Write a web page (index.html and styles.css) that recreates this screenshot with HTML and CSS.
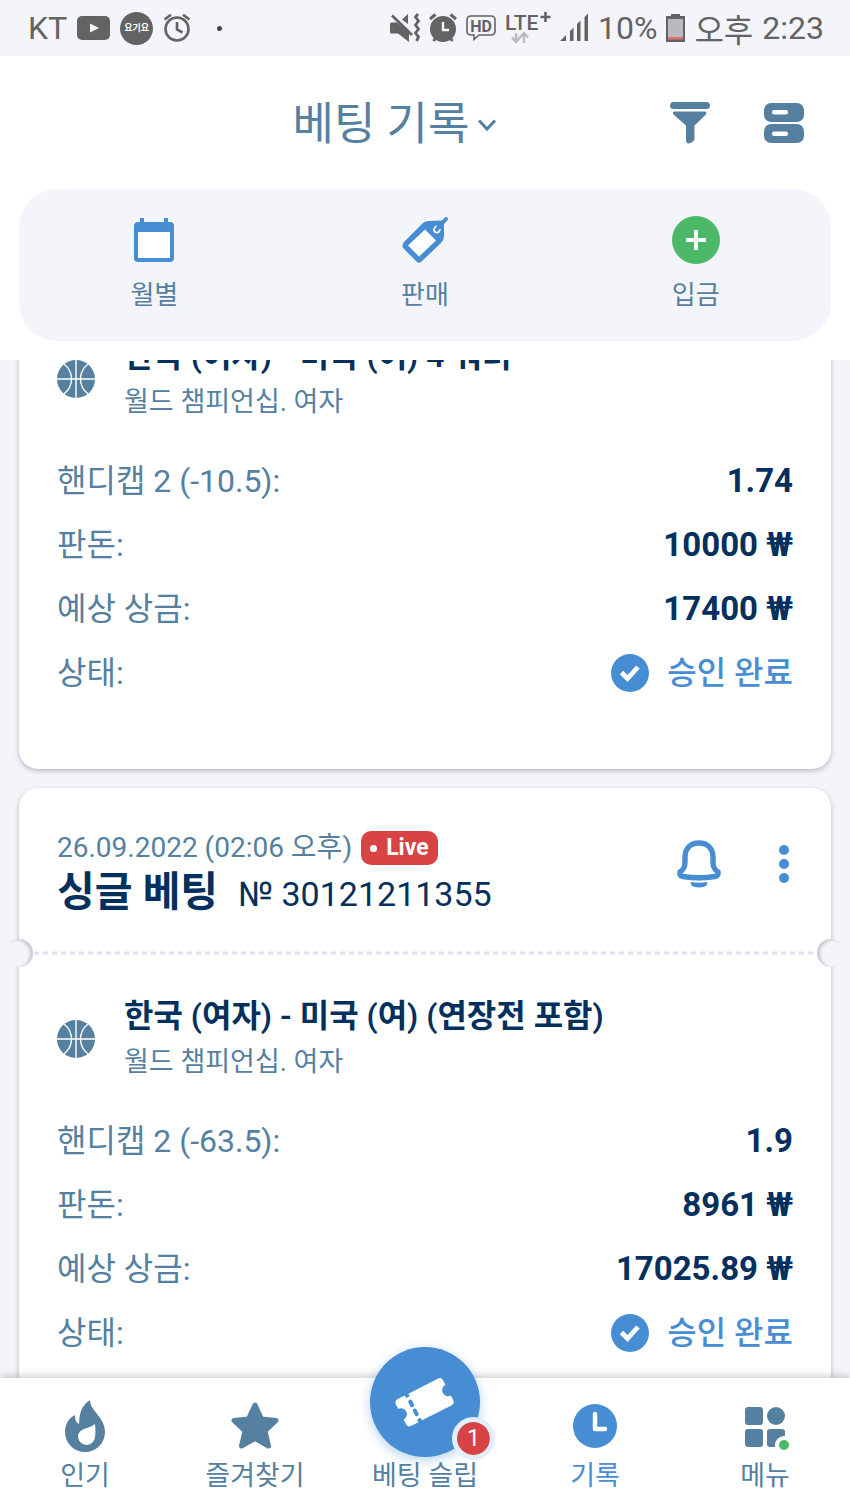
FILE: index.html
```html
<!DOCTYPE html>
<html lang="ko">
<head>
  <meta charset="UTF-8" />
  <meta name="viewport" content="width=device-width, initial-scale=1.0"/>
  <title>베팅 기록</title>
  <link rel="stylesheet" href="styles.css">
</head>
<body>
  <!-- Shared icons -->
  <svg class="sprite" aria-hidden="true">
    <symbol id="ball" viewBox="0 0 38 38">
      <circle cx="19" cy="19" r="19" fill="#5580a0"/>
      <path d="M19 0V38M0 19H38M7 4C17 12 17 26 7 34M31 4C21 12 21 26 31 34" fill="none" stroke="#fff" stroke-width="1.4"/>
    </symbol>
    <symbol id="check" viewBox="0 0 38 38">
      <circle cx="19" cy="19" r="19" fill="#478dd3"/>
      <path d="M10.5 18.500L16.500 24.500L27 13" fill="none" stroke="#fff" stroke-width="4.800"/>
    </symbol>
  </svg>

  <!-- Phone status bar -->
  <div class="status-bar">
    <div class="status-group">
      <span>KT</span>
      <svg width="33" height="24" viewBox="0 0 33 24"><rect width="33" height="24" rx="5" fill="#636363"/><path d="M13 7.500L22 12L13 16.500Z" fill="#f4f5fa"/></svg>
      <span class="app-dot">요기요</span>
      <svg width="28" height="30" viewBox="0 0 28 30" fill="none" stroke="#636363" stroke-width="2.600"><circle cx="14" cy="16" r="11.500"/><path d="M1.500 6.500L8 1.800M26.500 6.500L20 1.800M14 9V16.500L19.500 19.500"/></svg>
      <span class="status-more"></span>
    </div>
    <div class="status-group status-right">
      <svg width="30" height="30" viewBox="0 0 30 30"><path d="M0 11Q0 9.500 1.500 9.500H7L19 20V29L8 20.500H1.500Q0 20.500 0 19ZM18 1V11L12 6.500Z" fill="#636363"/><path d="M2 2.500L22 22" fill="none" stroke="#636363" stroke-width="2.800"/><path d="M28 1L25.500 4L28.500 8L25.500 12L28.500 16L25.500 20L28.500 24L26.500 28" fill="none" stroke="#636363" stroke-width="2.800"/></svg>
      <svg width="28" height="30" viewBox="0 0 28 30"><circle cx="14" cy="16" r="13" fill="#636363"/><path d="M1 6L6.500 1.500M27 6L21.500 1.500M4.500 28L7 24.500M23.500 28L21 24.500" stroke="#636363" stroke-width="3"/><path d="M14 9V17H20" fill="none" stroke="#f4f5fa" stroke-width="2.400"/></svg>
      <svg width="30" height="28" viewBox="0 0 30 28"><path d="M5 2H25Q29 2 29 6V17Q29 21 25 21H13L8 25.500V21H5Q1 21 1 17V6Q1 2 5 2Z" fill="none" stroke="#636363" stroke-width="1.600"/><text x="15" y="17.500" text-anchor="middle" class="hd">HD</text></svg>
      <svg width="46" height="34" viewBox="0 0 46 34"><text x="0" y="19" class="lte">LTE</text><path d="M40.500 1V11M35.500 6H45.500" stroke="#636363" stroke-width="2.600"/><path d="M11 22V30M7 26.500L11 31L15 26.500M19 32V23M15 26.500L19 22L23 26.500" fill="none" stroke="#b9babf" stroke-width="2.400"/></svg>
      <svg width="29" height="30" viewBox="0 0 29 30" fill="#636363"><path d="M0 28L6 22V28ZM10 28V18L13.500 14.500V28ZM17 28V11L20.500 7.500V28ZM24.500 28V4L28 .5V28Z"/></svg>
      <span>10%</span>
      <svg width="19" height="30" viewBox="0 0 19 30"><path d="M5 3V1H14V3H19V29H0V3Z" fill="#636363"/><rect x="2" y="6" width="15" height="18" fill="#b9babf"/><rect x="2" y="24" width="15" height="2.500" fill="#e07070"/></svg>
      <span>오후</span>
      <span>2:23</span>
    </div>
  </div>

  <!-- Header -->
  <header class="header">
    <button class="title-button">
      <h1>베팅 기록</h1>
      <svg width="20" height="14" viewBox="0 0 20 14"><path d="M2 2.500L10 11L18 2.500" fill="none" stroke="#5580a0" stroke-width="3"/></svg>
    </button>
    <div class="header-actions">
      <button aria-label="필터">
        <svg width="40" height="42" viewBox="0 0 40 42" fill="#5580a0"><rect width="40" height="7" rx="3.500"/><path d="M4 9.500H35Q37.500 10.500 35.500 13L24.500 23.500V37Q24 40 18.500 41.500Q16 41 16 38.500V23.500L4 13Q1.500 10.500 4 9.500Z"/></svg>
      </button>
      <button aria-label="보기 방식">
        <svg width="40" height="42" viewBox="0 0 40 42"><g fill="#5580a0"><rect y="1" width="40" height="19" rx="7"/><rect y="22" width="40" height="19" rx="7"/></g><rect x="8" y="8" width="16" height="4.500" rx="2" fill="#fff"/><rect x="8" y="29.500" width="16" height="4.500" rx="2" fill="#fff"/></svg>
      </button>
    </div>
  </header>

  <!-- Quick actions -->
  <div class="quick-wrap">
    <div class="quick-actions">
      <button class="quick-action">
        <svg width="48" height="48" viewBox="0 0 48 48"><path d="M12 2V8M36 2V8" stroke="#478dd3" stroke-width="4"/><rect x="4" y="6" width="40" height="40" rx="4" fill="#478dd3"/><rect x="8" y="16" width="32" height="26" fill="#fff"/></svg>
        <span>월별</span>
      </button>
      <button class="quick-action">
        <svg width="48" height="48" viewBox="0 0 48 48"><path d="M3 26L22 7Q24 5 28 5L40 4.500Q43 4.500 43 8V20Q43 24 40 27L20 46Q18 47.500 16 46L3 33Q0 30 3 26Z" fill="#478dd3"/><path d="M24 13.500L35 24.500L18 40.500L7 29.500Z" fill="#fff"/><path d="M36 10Q31 13 34 16Q38 18 39 13" fill="none" stroke="#fff" stroke-width="1.800"/><path d="M37 12L45 3" stroke="#478dd3" stroke-width="4" stroke-linecap="round"/></svg>
        <span>판매</span>
      </button>
      <button class="quick-action">
        <svg width="48" height="48" viewBox="0 0 48 48"><circle cx="24" cy="24" r="24" fill="#4cb868"/><path d="M24 14V34M14 24H34" stroke="#fff" stroke-width="4"/></svg>
        <span>입금</span>
      </button>
    </div>
  </div>

  <!-- Bet list, scrolled part way -->
  <main class="bets">
    <div class="bets-list">
      <article class="card card-cut">
        <div class="match">
          <svg class="round-icon"><use href="#ball"/></svg>
          <div>
            <h3>한국 (여자) - 미국 (여) 4 쿼터</h3>
            <p>월드 챔피언십. 여자</p>
          </div>
        </div>
        <dl class="details">
          <div class="row"><dt>핸디캡 2 (-10.5):</dt><dd>1.74</dd></div>
          <div class="row"><dt>판돈:</dt><dd>10000 ₩</dd></div>
          <div class="row"><dt>예상 상금:</dt><dd>17400 ₩</dd></div>
          <div class="row"><dt>상태:</dt><dd class="accepted"><svg class="round-icon"><use href="#check"/></svg>승인 완료</dd></div>
        </dl>
      </article>

      <article class="card">
        <div class="card-head">
          <div class="card-info">
            <div class="date-line"><time>26.09.2022 (02:06 오후)</time><span class="live">Live</span></div>
            <div class="bet-line"><h2>싱글 베팅</h2><span>№ 30121211355</span></div>
          </div>
          <button aria-label="알림">
            <svg width="44" height="48" viewBox="0 0 44 48"><path d="M8 17C8 8 14 3 22 3S36 8 36 17V22C36 28 38 30 41 32Q42 36 38 36.500Q22 39 6 36.500Q2 36 3 32C6 30 8 28 8 22Z" fill="none" stroke="#478dd3" stroke-width="5.400"/><path d="M14 42Q22 43.500 30 42Q32 47 22 47.500Q12 47 14 42Z" fill="#478dd3"/></svg>
          </button>
          <button aria-label="더 보기">
            <svg width="10" height="40" viewBox="0 0 10 40" fill="#478dd3"><circle cx="5" cy="6" r="5"/><circle cx="5" cy="20" r="5"/><circle cx="5" cy="34" r="5"/></svg>
          </button>
        </div>
        <div class="tear"><svg width="100%" height="2"><line x1="0" y1="1" x2="100%" y2="1" stroke="#dfe2ee" stroke-width="3" stroke-dasharray="5 4"/></svg></div>
        <div class="match">
          <svg class="round-icon"><use href="#ball"/></svg>
          <div>
            <h3>한국 (여자) - 미국 (여) (연장전 포함)</h3>
            <p>월드 챔피언십. 여자</p>
          </div>
        </div>
        <dl class="details">
          <div class="row"><dt>핸디캡 2 (-63.5):</dt><dd>1.9</dd></div>
          <div class="row"><dt>판돈:</dt><dd>8961 ₩</dd></div>
          <div class="row"><dt>예상 상금:</dt><dd>17025.89 ₩</dd></div>
          <div class="row"><dt>상태:</dt><dd class="accepted"><svg class="round-icon"><use href="#check"/></svg>승인 완료</dd></div>
        </dl>
      </article>
    </div>
  </main>

  <!-- Bottom navigation -->
  <nav class="nav">
    <a class="nav-item" href="#popular">
      <svg width="48" height="54" viewBox="0 0 48 54"><path d="M29 1C29 12 44 18 44 33A20 20 0 0 1 4 33C4 25 8 19 14 16C14 21 15 23 18 25C19 20 17 9 29 1Z" fill="#5580a0"/><path d="M34 25C28 30 17 29 17 38A8.500 8.500 0 0 0 26 46C35 45 35 36 34 25Z" fill="#fff"/></svg>
      <span>인기</span>
    </a>
    <a class="nav-item" href="#favorites">
      <svg width="48" height="54" viewBox="0 0 48 54"><path d="M24 6L30.500 20L45 21.500L34 32L37.500 47L24 39.500L10.500 47L14 32L3 21.500L17.500 20Z" fill="#5580a0" stroke="#5580a0" stroke-width="5" stroke-linejoin="round"/></svg>
      <span>즐겨찾기</span>
    </a>
    <a class="nav-item" href="#slip">
      <span class="slip-button">
        <svg width="60" height="50" viewBox="0 0 60 50"><g transform="rotate(-27 30 25)"><path d="M7 10H15V13H19V10H52Q56 10 56 14V19A6 6 0 0 0 56 31V36Q56 40 52 40H19V37H15V40H7Q3 40 3 36V31A6 6 0 0 0 3 19V14Q3 10 7 10Z" fill="#fff"/><path d="M17 18V22M17 28V32" stroke="#478dd3" stroke-width="4" stroke-linecap="round"/></g></svg>
        <span class="badge">1</span>
      </span>
      <span>베팅 슬립</span>
    </a>
    <a class="nav-item active" href="#history">
      <svg width="48" height="54" viewBox="0 0 48 54"><circle cx="24" cy="27" r="22" fill="#478dd3"/><path d="M24 15V30H34" fill="none" stroke="#fff" stroke-width="4.500" stroke-linecap="round" stroke-linejoin="round"/></svg>
      <span>기록</span>
    </a>
    <a class="nav-item" href="#menu">
      <svg width="48" height="54" viewBox="0 0 48 54"><g fill="#5580a0"><rect x="4" y="8" width="18" height="18" rx="3"/><circle cx="35" cy="17" r="9"/><rect x="4" y="30" width="18" height="18" rx="3"/><rect x="26" y="30" width="18" height="18" rx="3"/></g><circle cx="43" cy="46" r="9" fill="#fff"/><circle cx="43" cy="46" r="5" fill="#4cb868"/></svg>
      <span>메뉴</span>
    </a>
  </nav>
</body>
</html>
```
FILE: styles.css
```css
* {
  box-sizing: border-box;
}
body {
  display: flex;
  flex-direction: column;
  height: 100vh;
  margin: 0;
  overflow: hidden;
  background: #f4f5fa;
  color: #5580a0;
  font-family: Roboto, "Noto Sans CJK KR", sans-serif;
}
h1, h2, h3, p, dl, dd {
  margin: 0;
  font-size: inherit;
  font-weight: inherit;
}
button {
  padding: 0;
  border: none;
  background: none;
  color: inherit;
  font: inherit;
  cursor: pointer;
}
svg {
  display: block;
  flex: none;
  overflow: visible;
}
.sprite {
  position: absolute;
  width: 0;
  height: 0;
}

/* Status bar */
.status-bar {
  display: flex;
  justify-content: space-between;
  align-items: center;
  height: 56px;
  padding: 0 26px 0 28px;
  color: #636363;
  font-size: 32px;
}
.status-group {
  display: flex;
  align-items: center;
  gap: 10px;
}
.status-right {
  gap: 9px;
}
.app-dot {
  width: 33px;
  height: 33px;
  border-radius: 50%;
  background: #636363;
  color: #fff;
  font-size: 9px;
  font-weight: 700;
  line-height: 33px;
  text-align: center;
}
.status-more {
  width: 5px;
  height: 5px;
  margin-left: 16px;
  border-radius: 50%;
  background: #444;
}
.hd {
  font-size: 16px;
  font-weight: 700;
  fill: #636363;
}
.lte {
  font-size: 21px;
  font-weight: 500;
  fill: #636363;
}

/* Header */
.header {
  display: flex;
  align-items: center;
  height: 133px;
  padding: 0 46px 0 120px;
  background: #fff;
}
.title-button {
  display: flex;
  flex: 1;
  justify-content: center;
  align-items: center;
  gap: 8px;
  padding-top: 4px;
  font-size: 45px;
  line-height: 60px;
}
.header-actions {
  display: flex;
  gap: 54px;
}
.quick-wrap {
  padding: 0 19px 19px;
  background: #fff;
}
.quick-actions {
  display: grid;
  grid-template-columns: repeat(3, 1fr);
  height: 152px;
  border-radius: 38px;
  background: #f4f5fa;
}
.quick-action {
  display: flex;
  flex-direction: column;
  justify-content: center;
  align-items: center;
  gap: 12px;
  font-size: 26px;
  line-height: 38px;
}

/* Bet cards */
.bets {
  flex: 1;
  min-height: 0;
  overflow: hidden;
}
.bets-list {
  display: flex;
  flex-direction: column;
  gap: 19px;
  margin-top: -66px;
  padding: 0 19px;
}
.card {
  position: relative;
  padding-bottom: 64px;
  border-radius: 19px;
  background: #fff;
  box-shadow: 0 2px 5px rgba(40, 50, 80, 0.3);
}
.card-cut {
  border-radius: 0 0 19px 19px;
}
.card-head {
  display: flex;
  align-items: center;
  gap: 58px;
  height: 164px;
  padding: 0 42px 12px 38px;
}
.card-info {
  flex: 1;
  padding-top: 24px;
}
.date-line {
  display: flex;
  align-items: center;
  gap: 9px;
  font-size: 28px;
  line-height: 34px;
}
.live {
  display: flex;
  align-items: center;
  gap: 9px;
  padding: 0 9px;
  border-radius: 10px;
  background: #d84345;
  color: #fff;
  font-size: 23px;
  font-weight: 700;
}
.live::before {
  content: "";
  width: 7px;
  height: 7px;
  border-radius: 50%;
  background: #fff;
}
.bet-line {
  display: flex;
  align-items: baseline;
  gap: 20px;
  color: #03305c;
  font-size: 34px;
  line-height: 54px;
}
.bet-line h2 {
  font-size: 41px;
  font-weight: 700;
}
.tear {
  position: relative;
  padding: 0 15px;
}
.tear::before,
.tear::after {
  content: "";
  position: absolute;
  top: -13px;
  width: 28px;
  height: 28px;
  border-radius: 50%;
  background: #f4f5fa;
}
.tear::before {
  left: -14px;
  box-shadow: inset -3px 1px 3px rgba(40, 50, 80, 0.22);
}
.tear::after {
  right: -14px;
  box-shadow: inset 3px 1px 3px rgba(40, 50, 80, 0.22);
}
.match {
  display: flex;
  align-items: center;
  gap: 29px;
  padding: 39px 38px 24px;
}
.round-icon {
  width: 38px;
  height: 38px;
}
.match h3 {
  color: #03305c;
  font-size: 32px;
  font-weight: 600;
  line-height: 46px;
}
.match p {
  font-size: 27px;
  line-height: 46px;
}
.details {
  padding: 0 38px;
}
.row {
  display: flex;
  justify-content: space-between;
  align-items: center;
  height: 64px;
  font-size: 32px;
  line-height: 46px;
}
.row dd {
  color: #03305c;
  font-size: 33px;
  font-weight: 700;
}
.row .accepted {
  display: flex;
  align-items: center;
  gap: 18px;
  color: #478dd3;
  font-size: 32px;
  font-weight: 500;
}

/* Bottom navigation */
.nav {
  position: relative;
  display: grid;
  grid-template-rows: 133px;
  grid-template-columns: repeat(5, 1fr);
  background: #fff;
  box-shadow: 0 -2px 8px rgba(0, 0, 0, 0.2);
}
.nav-item {
  display: flex;
  flex-direction: column;
  justify-content: flex-end;
  align-items: center;
  gap: 4px;
  padding-bottom: 16px;
  color: #5580a0;
  font-size: 27px;
  line-height: 38px;
  text-decoration: none;
}
.nav-item.active {
  color: #478dd3;
}
.slip-button {
  position: relative;
  display: flex;
  flex: none;
  justify-content: center;
  align-items: center;
  width: 110px;
  height: 110px;
  margin-bottom: -4px;
  border-radius: 50%;
  background: #478dd3;
  box-shadow: 0 3px 12px rgba(71, 141, 211, 0.4);
}
.badge {
  position: absolute;
  right: -15px;
  bottom: -3px;
  width: 43px;
  height: 43px;
  border: 5px solid #e3eefa;
  border-radius: 50%;
  background: #d84345;
  background-clip: padding-box;
  color: #fff;
  font-size: 24px;
  line-height: 33px;
  text-align: center;
}
```
